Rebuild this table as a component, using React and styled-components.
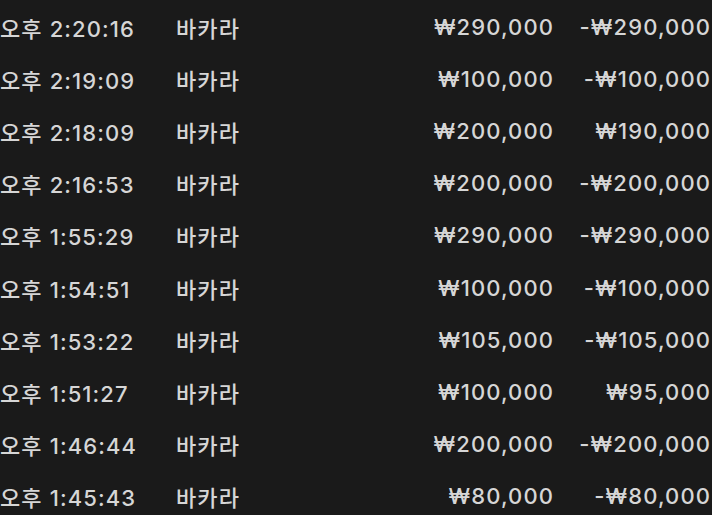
import styled, { createGlobalStyle } from "styled-components";

const GlobalStyle = createGlobalStyle`
  html, body {
    margin: 0;
    padding: 0;
    background-color: #1a1a1a;
  }
`;

const List = styled.div`
  background-color: #1a1a1a;
  width: 712px;
  height: 515px;
  overflow: hidden;
  padding-top: 1px;
  box-sizing: border-box;

  font-family: Inter, "Noto Sans CJK KR", sans-serif;
  font-size: 22px;
  font-weight: 500;
  letter-spacing: 1.1px;
  color: #d6d6d6;
`;

const Row = styled.div`
  display: grid;
  grid-template-columns: 176px 1fr 160px 157px;
  align-items: center;
  height: 52.1px;
  padding-right: 1px;
  white-space: nowrap;
`;

const Cell = styled.div`
  text-align: ${(props) => (props.$right ? "right" : "left")};
`;

const rows = [
  ["오후 2:20:16", "바카라", "₩290,000", "-₩290,000"],
  ["오후 2:19:09", "바카라", "₩100,000", "-₩100,000"],
  ["오후 2:18:09", "바카라", "₩200,000", "₩190,000"],
  ["오후 2:16:53", "바카라", "₩200,000", "-₩200,000"],
  ["오후 1:55:29", "바카라", "₩290,000", "-₩290,000"],
  ["오후 1:54:51", "바카라", "₩100,000", "-₩100,000"],
  ["오후 1:53:22", "바카라", "₩105,000", "-₩105,000"],
  ["오후 1:51:27", "바카라", "₩100,000", "₩95,000"],
  ["오후 1:46:44", "바카라", "₩200,000", "-₩200,000"],
  ["오후 1:45:43", "바카라", "₩80,000", "-₩80,000"],
];

const App = () => {
  return (
    <>
      <GlobalStyle />
      <List>
        {rows.map((r, i) => (
          <Row key={i}>
            <Cell>{r[0]}</Cell>
            <Cell>{r[1]}</Cell>
            <Cell $right>{r[2]}</Cell>
            <Cell $right>{r[3]}</Cell>
          </Row>
        ))}
      </List>
    </>
  );
};

export default App;
